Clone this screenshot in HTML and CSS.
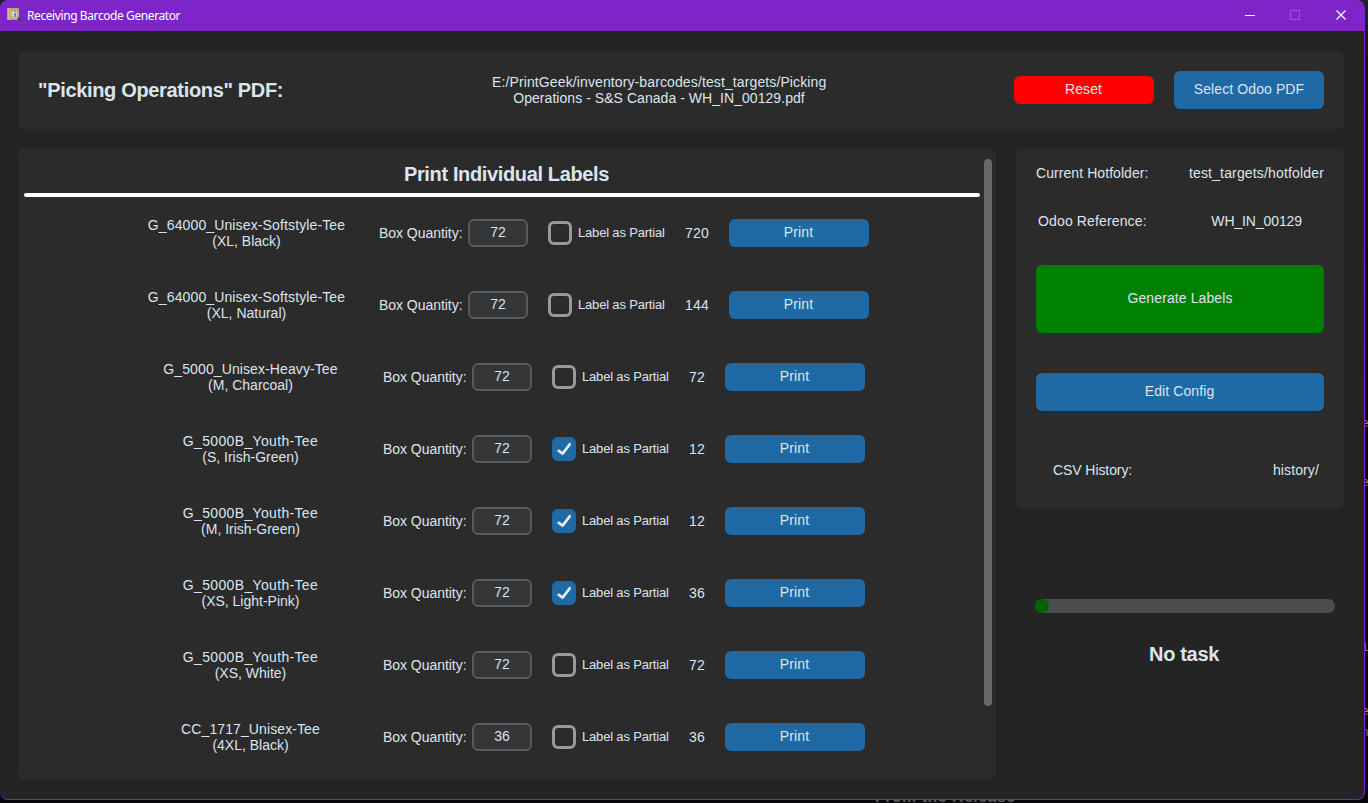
FILE: index.html
```html
<!DOCTYPE html>
<html lang="en">
<head>
<meta charset="utf-8">
<title>Receiving Barcode Generator</title>
<link rel="stylesheet" href="styles.css">
</head>
<body>
<div class="behind">
  <span class="peek peek-a">e</span><span class="peek peek-b">e</span><span class="peek peek-c">i</span><span class="peek peek-d">e</span><span class="peek peek-e">n</span>
  <span class="peek-title">From the Release</span>
</div>
<div class="window">
  <header class="titlebar">
    <svg class="app-icon" width="16" height="16" viewBox="0 0 16 16">
      <rect x="1" y="1" width="12" height="12" fill="#c79d6a"/>
      <path d="M2.500 1.500v11M4.500 1.500v11" stroke="#dcb988" stroke-width="1"/>
      <path d="M12 11l2.500 2.500" stroke="#3b3f3d" stroke-width="2.400"/>
      <ellipse cx="9" cy="7" rx="4" ry="5" fill="#b0b4ae"/>
      <ellipse cx="8.500" cy="7" rx="2.200" ry="3.500" fill="#dcdeda"/>
      <path d="M9 3.500v1.200M9 6v4" stroke="#5c5e5a" stroke-width="1.400"/>
    </svg>
    <span class="app-title">Receiving Barcode Generator</span>
    <svg class="win-controls" width="104" height="12" viewBox="0 0 104 12">
      <path d="M0 6.500h10" stroke="#fff"/>
      <rect x="45.500" y="1.500" width="9" height="9" fill="none" stroke="#9d55d8"/>
      <path d="M91.500 1.500l9 9M100.500 1.500l-9 9" stroke="#fff" stroke-width="1.200"/>
    </svg>
  </header>
  <main class="content">
    <section class="panel top">
      <h1 class="heading top-title">"Picking Operations" PDF:</h1>
      <p class="path"><span class="path-first">E:/PrintGeek/inventory-barcodes/test_targets/Picking</span><br>Operations - S&amp;S Canada - WH_IN_00129.pdf</p>
      <button class="btn reset">Reset</button>
      <button class="btn select">Select Odoo PDF</button>
    </section>
    <div class="columns">
      <section class="panel labels">
        <div class="list">
          <h2 class="heading list-title">Print Individual Labels</h2>
          <div class="rule"></div>
          <div class="rows" id="rows"></div>
        </div>
        <div class="scrollbar"></div>
      </section>
      <aside class="side">
        <section class="panel info">
          <div class="pair hot"><span>Current Hotfolder:</span><span class="hot-value">test_targets/hotfolder</span></div>
          <div class="pair ref"><span class="ref-label">Odoo Reference:</span><span class="ref-value">WH_IN_00129</span></div>
          <button class="btn generate">Generate Labels</button>
          <button class="btn config">Edit Config</button>
          <div class="pair csv"><span class="csv-label">CSV History:</span><span class="csv-value">history/</span></div>
        </section>
        <div class="progress"><div class="progress-fill"></div></div>
        <div class="heading task">No task</div>
      </aside>
    </div>
  </main>
</div>
<script src="rows.js"></script>
</body>
</html>
```
FILE: rows.js
```js
const items = [
  ["G_64000_Unisex-Softstyle-Tee", "(XL, Black)", 72, false, 720, "softstyle"],
  ["G_64000_Unisex-Softstyle-Tee", "(XL, Natural)", 72, false, 144, "softstyle"],
  ["G_5000_Unisex-Heavy-Tee", "(M, Charcoal)", 72, false, 72, "heavy"],
  ["G_5000B_Youth-Tee", "(S, Irish-Green)", 72, true, 12, "youth"],
  ["G_5000B_Youth-Tee", "(M, Irish-Green)", 72, true, 12, "youth"],
  ["G_5000B_Youth-Tee", "(XS, Light-Pink)", 72, true, 36, "youth"],
  ["G_5000B_Youth-Tee", "(XS, White)", 72, false, 72, "youth"],
  ["CC_1717_Unisex-Tee", "(4XL, Black)", 36, false, 36, "heavy"]
];
const tick = '<svg width="24" height="24" viewBox="0 0 24 24"><path d="M6.700 13.900l4 2.600 7-9.200" fill="none" stroke="#e2e8ee" stroke-width="2.800" stroke-linecap="round" stroke-linejoin="round"/></svg>';
document.getElementById("rows").innerHTML = items.map(([name, variant, box, partial, total, style]) => `
  <div class="row">
    <div class="name"><span class="${style}">${name}</span><br>${variant}</div>
    <span class="qty-label">Box Quantity:</span>
    <div class="entry">${box}</div>
    <div class="check${partial ? " checked" : ""}">${partial ? tick : ""}</div>
    <span class="partial">Label as Partial</span>
    <span class="total${total > 99 ? " wide" : ""}">${total}</span>
    <button class="btn print">Print</button>
  </div>`).join("");
```
FILE: styles.css
```css
* { box-sizing: border-box; }
body {
  margin: 0;
  width: 1368px;
  height: 803px;
  overflow: hidden;
  background: #0b0910;
  color: #dce4ee;
  font: 14px/16px "Liberation Sans", Arial, sans-serif;
}
.behind { position: absolute; inset: 0; overflow: hidden; background: linear-gradient(#20222e 0, #14151c 60px, #08080c 440px); }
.peek { position: absolute; left: 1361px; font: 13px/16px "Liberation Mono", monospace; color: #a08a70; }
.peek-a { top: 416px; color: #8b8b90; }
.peek-b { top: 475px; }
.peek-c { top: 640px; color: #77839a; }
.peek-d { top: 704px; }
.peek-e { top: 725px; color: #66728c; }
.peek-title { position: absolute; left: 875px; top: 788px; font-size: 16px; line-height: 18px; font-weight: bold; letter-spacing: 0.45px; color: #5c5c60; white-space: nowrap; }
.window {
  position: relative;
  width: 1365px;
  height: 800px;
  border: solid #7d25c9;
  border-width: 0 1px 1px 0;
  border-radius: 8px;
  background: #242424;
  overflow: hidden;
}
.titlebar { display: flex; align-items: center; height: 31px; padding: 0 15px 0 6px; background: #7d25c9; }
.app-icon { flex: none; margin-top: -2px; }
.app-title { margin: 1px auto 0 5px; font: 12px/16px "Noto Sans", "Open Sans", sans-serif; letter-spacing: -0.41px; color: #fff; }
.win-controls { flex: none; margin-top: -1px; }
.content { display: flex; flex-direction: column; gap: 20px; padding: 20px 20px 20px 18px; }
.panel { background: #2b2b2b; border-radius: 6px; }
.heading { margin: 0; font-size: 20px; line-height: 24px; font-weight: bold; letter-spacing: -0.33px; white-space: nowrap; }
.btn {
  display: flex;
  flex: none;
  align-items: center;
  justify-content: center;
  border: 0;
  border-radius: 6px;
  padding: 0 0 2px;
  background: #1f6aa5;
  color: #dce4ee;
  font: inherit;
  letter-spacing: 0.1px;
}
.top { display: flex; align-items: center; height: 78px; padding: 0 20px; }
.top-title { width: 454px; }
.path { width: 334px; margin: 0 188px 0 0; text-align: center; white-space: nowrap; letter-spacing: 0.05px; }
.path-first { letter-spacing: 0.115px; }
.reset { width: 140px; height: 28px; margin-right: 20px; padding-right: 1px; background: #f00; }
.select { width: 150px; height: 38px; }
.columns { display: flex; gap: 20px; }
.labels { display: flex; width: 978px; height: 630px; padding: 10px 4px 0 6px; }
.list { width: 956px; }
.list-title { padding: 3px 0 0 9px; height: 34px; text-align: center; letter-spacing: -0.36px; }
.rule { height: 4px; border-radius: 2px; background: #fff; }
.row { display: flex; align-items: center; justify-content: center; height: 72px; white-space: nowrap; }
.name { width: 223px; text-align: center; }
.softstyle { letter-spacing: 0.13px; }
.heavy { letter-spacing: 0.1px; }
.youth { letter-spacing: 0.34px; }
.qty-label { width: 84px; margin: 0 5px 0 21px; letter-spacing: -0.04px; }
.entry { width: 60px; height: 28px; border: 2px solid #565b5e; border-radius: 6px; background: #343638; line-height: 23px; text-align: center; }
.check { width: 24px; height: 24px; margin: 0 6px 0 20px; border: 3px solid #949a9f; border-radius: 6px; }
.checked { border: 0; background: #1f6aa5; }
.check svg { display: block; }
.partial { width: 87px; font-size: 13px; letter-spacing: -0.18px; }
.total { width: 16px; margin: 0 20px; letter-spacing: 0.2px; }
.wide { width: 24px; }
.print { width: 140px; height: 28px; padding-right: 1px; }
.scrollbar { width: 8px; height: 547px; margin-left: 4px; border-radius: 4px; background: #696969; }
.side { width: 328px; }
.info { height: 360px; padding: 16px 20px 0; letter-spacing: 0.07px; }
.pair { display: flex; justify-content: space-between; white-space: nowrap; }
.hot-value { letter-spacing: 0.16px; }
.ref { padding: 0 22px 0 2px; margin-top: 32px; }
.ref-label { letter-spacing: 0.14px; }
.ref-value { letter-spacing: -0.1px; }
.generate { width: 288px; height: 68px; margin-top: 36px; background: #008000; }
.config { width: 288px; height: 38px; margin-top: 40px; padding-right: 1px; }
.csv { padding: 0 5px 0 17px; margin-top: 51px; }
.csv-label { letter-spacing: -0.08px; }
.csv-value { letter-spacing: 0.12px; }
.progress { width: 300px; height: 14px; margin: 90px 0 0 19px; border-radius: 7px; background: #4a4d50; }
.progress-fill { width: 14px; height: 14px; border-radius: 7px; background: #006400; }
.task { margin-top: 29px; padding-left: 8px; text-align: center; }
```
